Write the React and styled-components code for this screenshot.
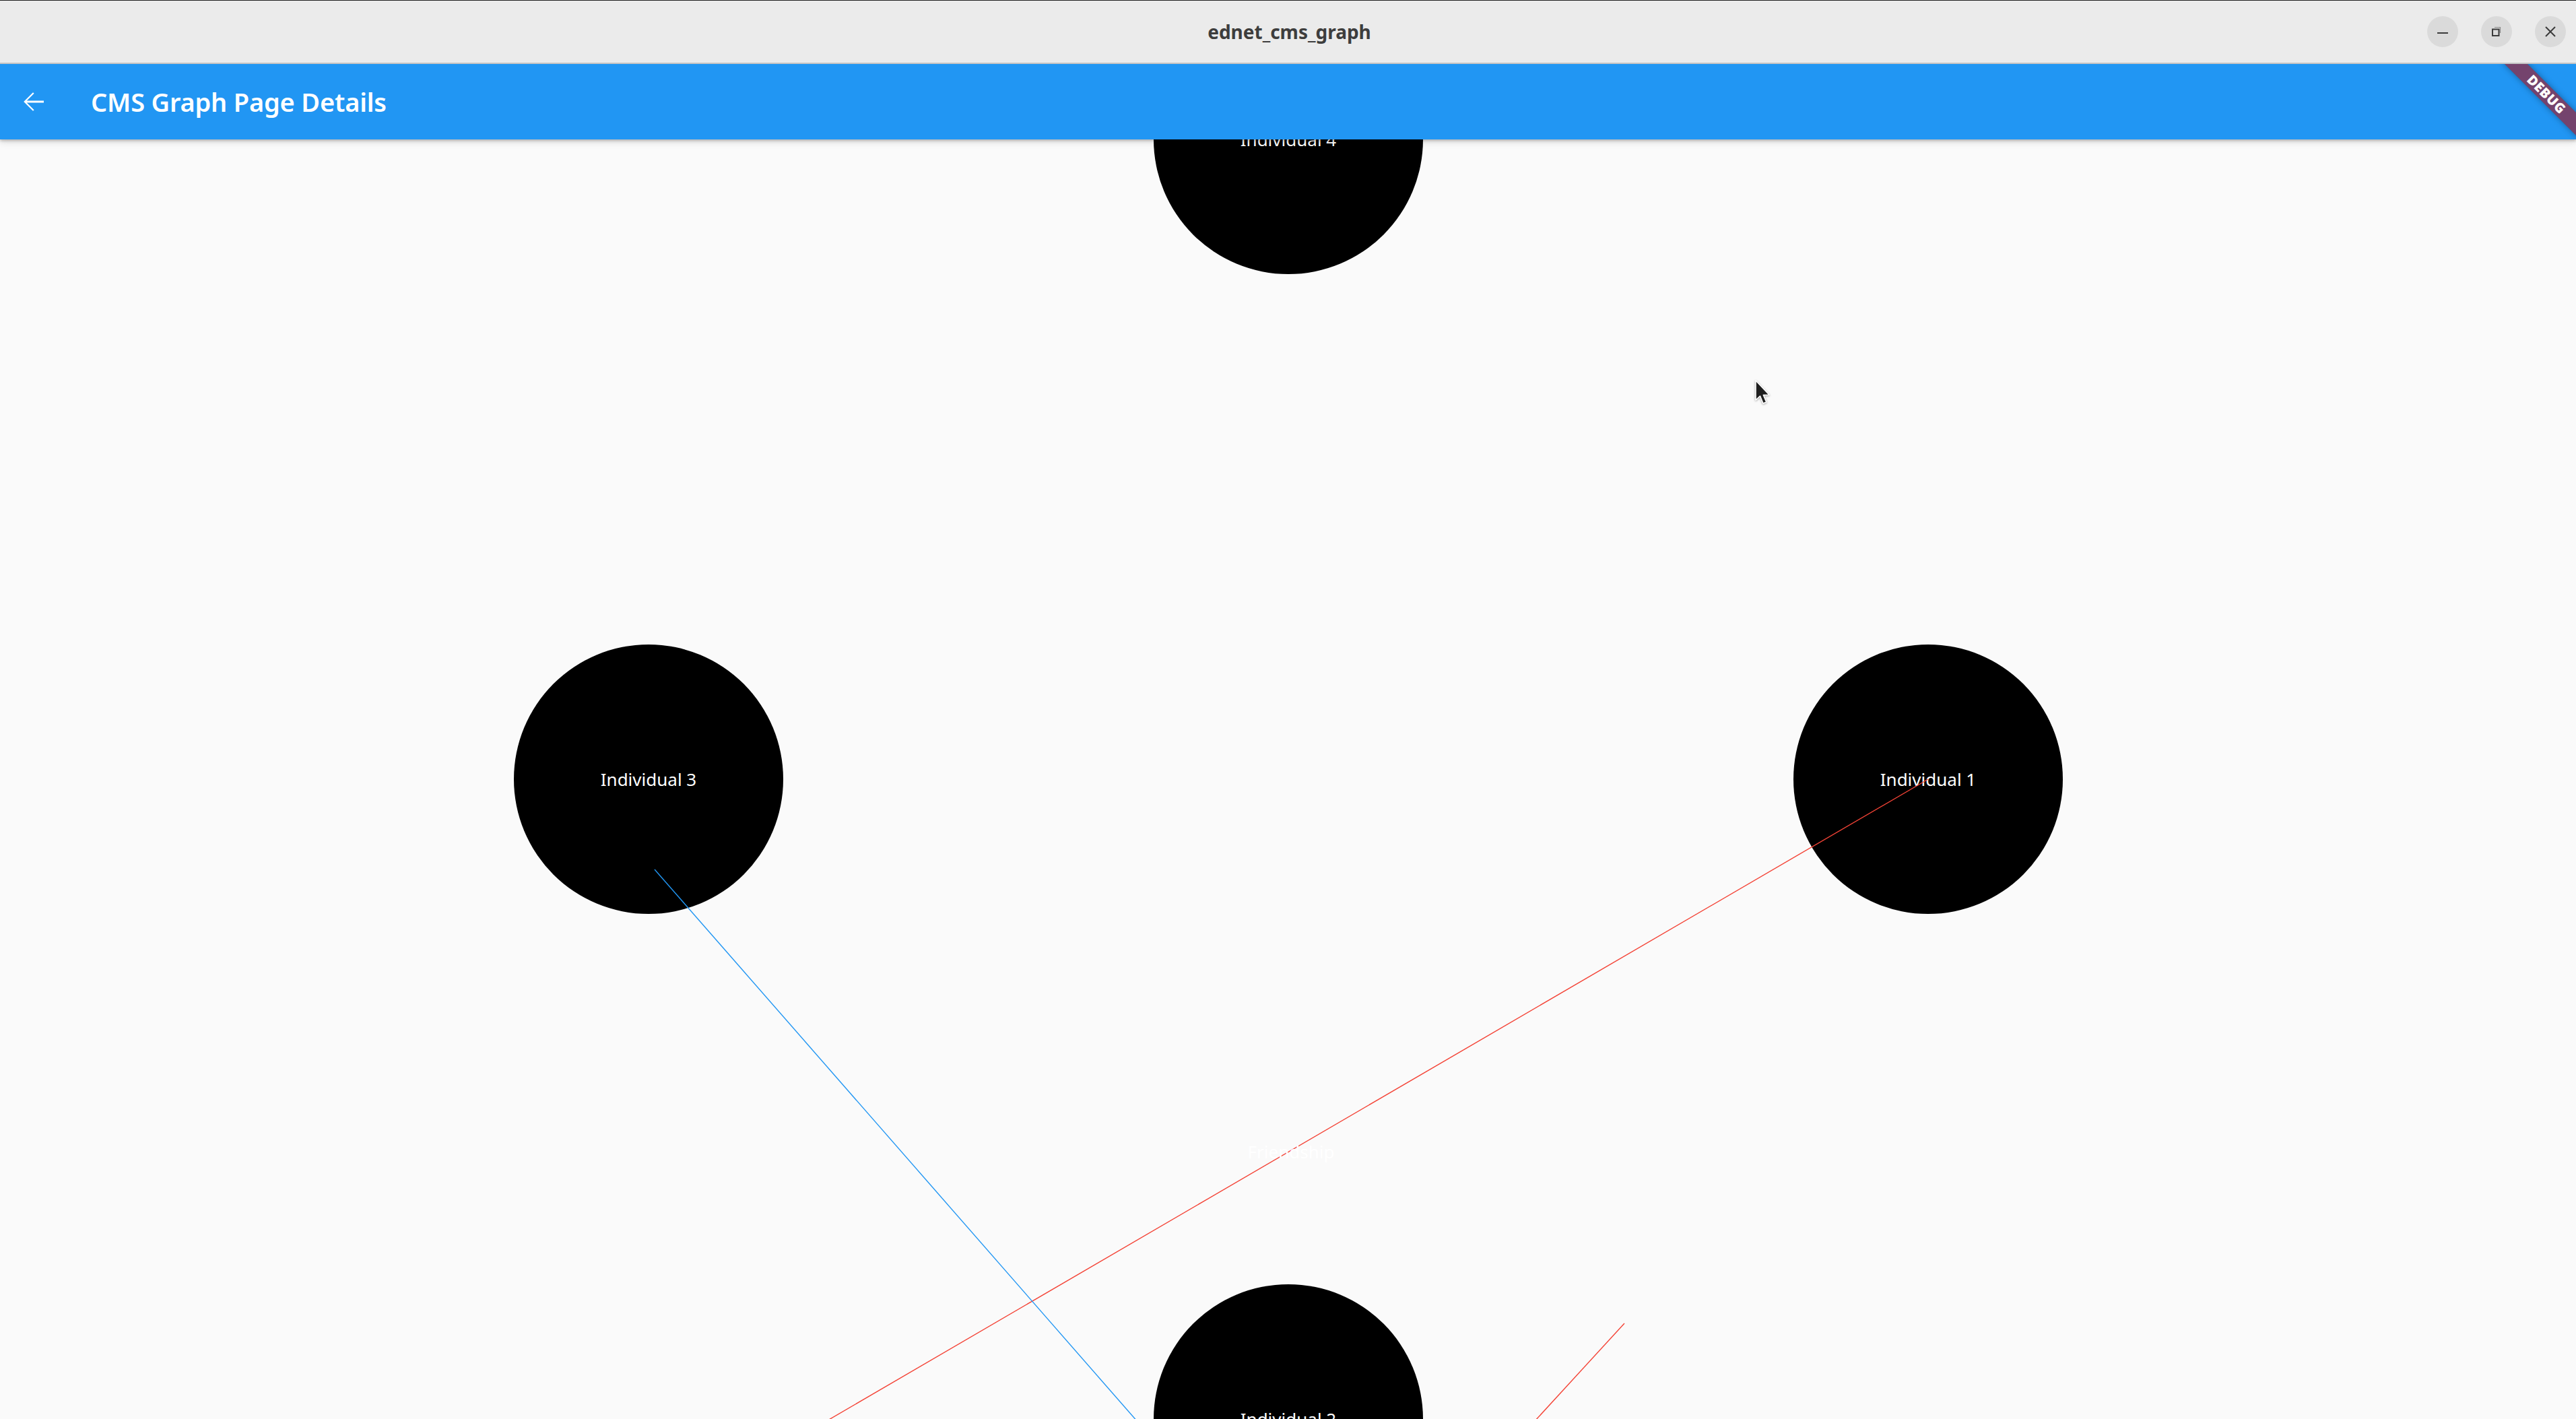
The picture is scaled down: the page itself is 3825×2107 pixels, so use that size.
import React from "react";
import styled, { createGlobalStyle } from "styled-components";

const GlobalStyle = createGlobalStyle`
  html, body {
    margin: 0;
    padding: 0;
    height: 100%;
    overflow: hidden;
  }
  body {
    font-family: "Noto Sans", "DejaVu Sans", sans-serif;
    background: #fafafa;
  }
  #root {
    height: 100%;
  }
`;

// graph data, in canvas pixels (canvas starts under the app bar)
const nodes = [
  { id: 1, label: "Individual 1", x: 2863, y: 950 },
  { id: 2, label: "Individual 2", x: 1913, y: 1900 },
  { id: 3, label: "Individual 3", x: 963, y: 950 },
  { id: 4, label: "Individual 4", x: 1913, y: 0 },
];

const edges = [
  { id: "e1", x1: 2863, y1: 950, x2: 1066, y2: 1997, color: "#f44336" },
  { id: "e2", x1: 972, y1: 1084, x2: 1773, y2: 2000, color: "#2196f3" },
  { id: "e3", x1: 2412, y1: 1758, x2: 2190, y2: 2000, color: "#f44336" },
];

const edgeLabels = [{ id: "l1", text: "Friendship", x: 1917, y: 1503 }];

const NODE_SIZE = 400;

class App extends React.Component {
  render() {
    return (
      <Window>
        <GlobalStyle />
        <TitleBar>
          <span />
          <WindowTitle>ednet_cms_graph</WindowTitle>
          <Controls>
            <CtrlButton aria-label="minimize">
              <svg width="18" height="18" viewBox="0 0 18 18">
                <rect x="1" y="10" width="16" height="2" fill="#3b3b3b" />
              </svg>
            </CtrlButton>
            <CtrlButton aria-label="restore">
              <svg width="18" height="18" viewBox="0 0 18 18">
                <path d="M6 2.5h8.5V11" fill="none" stroke="#8a8a8a" strokeWidth="1.2" />
                <rect x="3" y="5.5" width="9.5" height="9.5" fill="none" stroke="#3b3b3b" strokeWidth="2" />
              </svg>
            </CtrlButton>
            <CtrlButton aria-label="close">
              <svg width="18" height="18" viewBox="0 0 18 18">
                <path d="M2 2L16 16M16 2L2 16" stroke="#3b3b3b" strokeWidth="2" />
              </svg>
            </CtrlButton>
          </Controls>
        </TitleBar>

        <AppFrame>
          <AppBar>
            <BackButton aria-label="back">
              <svg width="48" height="48" viewBox="0 0 24 24">
                <path
                  d="M20 11.3H7.4l5.4-5.4L12 5.1 5.1 12l6.9 6.9.8-.8-5.4-5.4H20z"
                  fill="#fff"
                />
              </svg>
            </BackButton>
            <PageTitle>CMS Graph Page Details</PageTitle>
          </AppBar>

          <Canvas>
            {nodes.map((n) => (
              <Node key={n.id} $x={n.x} $y={n.y}>
                {n.label}
              </Node>
            ))}
            <Edges>
              {edges.map((e) => (
                <line
                  key={e.id}
                  x1={e.x1}
                  y1={e.y1}
                  x2={e.x2}
                  y2={e.y2}
                  stroke={e.color}
                  strokeWidth="1.4"
                />
              ))}
            </Edges>
            {edgeLabels.map((l) => (
              <EdgeLabel key={l.id} $x={l.x} $y={l.y}>
                {l.text}
              </EdgeLabel>
            ))}
            <Pointer width="26" height="40" viewBox="0 0 26 40">
              <path
                d="M2 2L2 31L8.5 25L13 36L17.8 34L13.4 23.6L22 23.2Z"
                fill="#1e1e1e"
                stroke="#fff"
                strokeWidth="1.6"
                strokeLinejoin="round"
              />
            </Pointer>
          </Canvas>

          <DebugBanner>DEBUG</DebugBanner>
        </AppFrame>
      </Window>
    );
  }
}

const Window = styled.div`
  display: flex;
  flex-direction: column;
  width: 100vw;
  height: 100vh;
  box-sizing: border-box;
  border-top: 1px solid #1f1f1f;
`;

const TitleBar = styled.header`
  flex: 0 0 auto;
  height: 92px;
  display: grid;
  grid-template-columns: 1fr auto 1fr;
  align-items: center;
  background: #ebebeb;
  border-bottom: 2px solid #c4c4c4;
`;

const WindowTitle = styled.div`
  font-family: "Noto Sans", "DejaVu Sans", sans-serif;
  font-weight: 700;
  font-size: 28px;
  color: #3d3d3d;
  padding-left: 4px;
`;

const Controls = styled.div`
  justify-self: end;
  display: flex;
  gap: 34px;
  padding-right: 15px;
`;

const CtrlButton = styled.div`
  width: 46px;
  height: 46px;
  border-radius: 50%;
  background: #dadada;
  display: flex;
  align-items: center;
  justify-content: center;
`;

const AppFrame = styled.div`
  flex: 1 1 auto;
  position: relative;
  overflow: hidden;
  display: flex;
  flex-direction: column;
`;

const AppBar = styled.div`
  position: relative;
  z-index: 3;
  flex: 0 0 auto;
  height: 112px;
  display: flex;
  align-items: center;
  padding-left: 25px;
  background: #2196f3;
  box-shadow: 0 2px 4px rgba(0, 0, 0, 0.22), 0 4px 10px rgba(0, 0, 0, 0.12);
`;

const BackButton = styled.div`
  width: 48px;
  height: 48px;
  display: flex;
  margin-right: 62px;
`;

const PageTitle = styled.h1`
  margin: 0;
  font-family: "Noto Sans", "DejaVu Sans", sans-serif;
  font-weight: 600;
  font-size: 38px;
  color: #fff;
  letter-spacing: -0.2px;
`;

const Canvas = styled.main`
  flex: 1 1 auto;
  position: relative;
  overflow: hidden;
  background: #fafafa;
`;

const Node = styled.div`
  position: absolute;
  z-index: 1;
  left: ${(p) => p.$x - NODE_SIZE / 2}px;
  top: ${(p) => p.$y - NODE_SIZE / 2}px;
  width: ${NODE_SIZE}px;
  height: ${NODE_SIZE}px;
  border-radius: 50%;
  background: #000;
  display: flex;
  align-items: center;
  justify-content: center;
  color: #fff;
  font-size: 26px;
  line-height: 1;
`;

const Edges = styled.svg`
  position: absolute;
  z-index: 2;
  left: 0;
  top: 0;
  width: 100%;
  height: 100%;
  pointer-events: none;
`;

const EdgeLabel = styled.div`
  position: absolute;
  z-index: 3;
  left: ${(p) => p.$x}px;
  top: ${(p) => p.$y}px;
  transform: translate(-50%, -50%);
  color: #fff;
  font-size: 26px;
  line-height: 1;
  white-space: nowrap;
`;

const Pointer = styled.svg`
  position: absolute;
  z-index: 5;
  left: 2605px;
  top: 356px;
  filter: drop-shadow(0 1px 1.5px rgba(0, 0, 0, 0.35));
`;

const DebugBanner = styled.div`
  position: absolute;
  z-index: 6;
  top: 33px;
  right: -36px;
  width: 160px;
  height: 24px;
  transform: rotate(45deg);
  background: rgba(160, 24, 40, 0.66);
  box-shadow: 0 0 10px rgba(0, 0, 0, 0.35);
  display: flex;
  align-items: center;
  justify-content: center;
  color: #fff;
  font-family: "Noto Sans", "DejaVu Sans", sans-serif;
  font-weight: 900;
  font-size: 20px;
  line-height: 1;
  letter-spacing: 0.5px;
`;

export default App;
